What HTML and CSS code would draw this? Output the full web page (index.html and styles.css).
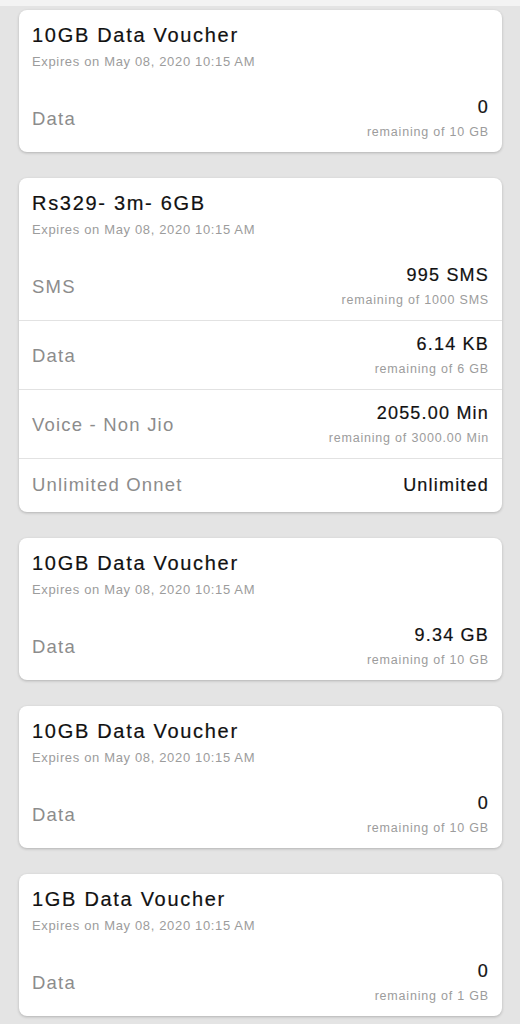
FILE: index.html
```html
<!DOCTYPE html>
<html lang="en">
<head>
<meta charset="utf-8">
<title>Vouchers</title>
<link rel="stylesheet" href="styles.css">
</head>
<body>
<div class="topbar"></div>
<main class="list">
  <section class="card">
    <header class="card-head">
      <h2 class="title">10GB Data Voucher</h2>
      <p class="expires">Expires on May 08, 2020 10:15 AM</p>
    </header>
    <div class="row">
      <span class="label">Data</span>
      <div class="amount"><span class="value">0</span><span class="sub">remaining of 10 GB</span></div>
    </div>
  </section>

  <section class="card">
    <header class="card-head">
      <h2 class="title">Rs329- 3m- 6GB</h2>
      <p class="expires">Expires on May 08, 2020 10:15 AM</p>
    </header>
    <div class="row">
      <span class="label">SMS</span>
      <div class="amount"><span class="value">995 SMS</span><span class="sub">remaining of 1000 SMS</span></div>
    </div>
    <div class="row">
      <span class="label">Data</span>
      <div class="amount"><span class="value">6.14 KB</span><span class="sub">remaining of 6 GB</span></div>
    </div>
    <div class="row">
      <span class="label">Voice - Non Jio</span>
      <div class="amount"><span class="value">2055.00 Min</span><span class="sub">remaining of 3000.00 Min</span></div>
    </div>
    <div class="row single">
      <span class="label">Unlimited Onnet</span>
      <div class="amount"><span class="value">Unlimited</span></div>
    </div>
  </section>

  <section class="card">
    <header class="card-head">
      <h2 class="title">10GB Data Voucher</h2>
      <p class="expires">Expires on May 08, 2020 10:15 AM</p>
    </header>
    <div class="row">
      <span class="label">Data</span>
      <div class="amount"><span class="value">9.34 GB</span><span class="sub">remaining of 10 GB</span></div>
    </div>
  </section>

  <section class="card">
    <header class="card-head">
      <h2 class="title">10GB Data Voucher</h2>
      <p class="expires">Expires on May 08, 2020 10:15 AM</p>
    </header>
    <div class="row">
      <span class="label">Data</span>
      <div class="amount"><span class="value">0</span><span class="sub">remaining of 10 GB</span></div>
    </div>
  </section>

  <section class="card">
    <header class="card-head">
      <h2 class="title">1GB Data Voucher</h2>
      <p class="expires">Expires on May 08, 2020 10:15 AM</p>
    </header>
    <div class="row">
      <span class="label">Data</span>
      <div class="amount"><span class="value">0</span><span class="sub">remaining of 1 GB</span></div>
    </div>
  </section>
</main>
</body>
</html>
```

FILE: styles.css
```css
html, body {
  margin: 0;
  padding: 0;
}

body {
  background: #e4e4e4;
  font-family: "Liberation Sans", Arial, sans-serif;
  color: #111;
}

.topbar {
  height: 6px;
  background: #f3f3f3;
}

.list {
  display: flex;
  flex-direction: column;
  gap: 26px;
  padding: 4px 18px 20px 19px;
}

.card {
  background: #fff;
  border-radius: 8px;
  box-shadow: 0 1px 3px rgba(0, 0, 0, 0.22);
  overflow: hidden;
}

.card-head {
  padding: 13px 13px 13px;
}

.title {
  margin: 0;
  font-size: 20px;
  line-height: 24px;
  font-weight: 400;
  letter-spacing: 1.7px;
  color: #111;
  -webkit-text-stroke: 0.2px #111;
}

.expires {
  margin: 7px 0 0;
  font-size: 13px;
  line-height: 16px;
  letter-spacing: 0.65px;
  color: #9c9c9c;
}

.row {
  display: flex;
  justify-content: space-between;
  align-items: center;
  padding: 14px 13px 12px;
}

.row + .row {
  padding-top: 13px;
  border-top: 1px solid #e2e2e2;
}

.row.single {
  padding-top: 16px;
  padding-bottom: 17px;
}

.label {
  font-size: 18.5px;
  line-height: 20px;
  letter-spacing: 1.2px;
  color: #8c8c8c;
}

.amount {
  display: flex;
  flex-direction: column;
  align-items: flex-end;
}

.value {
  font-size: 18px;
  line-height: 20px;
  letter-spacing: 1.2px;
  color: #111;
  -webkit-text-stroke: 0.2px #111;
}

.sub {
  margin-top: 7px;
  font-size: 12.5px;
  line-height: 16px;
  letter-spacing: 0.8px;
  color: #9c9c9c;
}
```
